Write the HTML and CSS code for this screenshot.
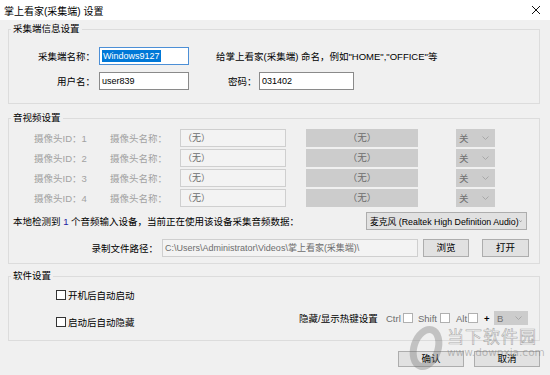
FILE: index.html
```html
<!DOCTYPE html>
<html lang="zh-CN">
  <head>
    <meta charset="UTF-8" />
    <meta name="viewport" content="width=device-width, initial-scale=1.0" />
    <title>掌上看家(采集端) 设置</title>
    <link rel="stylesheet" href="styles.css">
  </head>
  <body>
    <div class="titlebar">
      <span class="title">掌上看家(采集端) 设置</span>
      <svg class="close" width="10" height="10" viewBox="0 0 10 10">
        <path d="M1 1 L9 9 M9 1 L1 9" stroke="#111" stroke-width="1" fill="none" />
      </svg>
    </div>

    <div class="dialog">
      <fieldset class="group g-info">
        <legend>采集端信息设置</legend>
        <div class="info-row">
          <span class="lbl">采集端名称：</span>
          <div class="field focus"><span class="sel">Windows9127</span></div>
          <span class="hint">给掌上看家(采集端) 命名，例如"HOME","OFFICE"等</span>
        </div>
        <div class="info-row">
          <span class="lbl">用户名：</span>
          <div class="field">user839</div>
          <span class="lbl-pwd">密码：</span>
          <div class="field pwd">031402</div>
        </div>
      </fieldset>

      <fieldset class="group g-av">
        <legend>音视频设置</legend>
        <div class="cam-row">
          <span class="cam-id">摄像头ID：1</span>
          <span class="cam-name">摄像头名称：</span>
          <div class="field dis cam-field">（无）</div>
          <div class="greybox">（无）</div>
          <div class="dsel"><span>关</span><svg width="7" height="4" viewBox="0 0 7 4"><path d="M0.5 0.5 L3.5 3.5 L6.5 0.5" stroke="#a8a8a8" fill="none" /></svg></div>
        </div>
        <div class="cam-row">
          <span class="cam-id">摄像头ID：2</span>
          <span class="cam-name">摄像头名称：</span>
          <div class="field dis cam-field">（无）</div>
          <div class="greybox">（无）</div>
          <div class="dsel"><span>关</span><svg width="7" height="4" viewBox="0 0 7 4"><path d="M0.5 0.5 L3.5 3.5 L6.5 0.5" stroke="#a8a8a8" fill="none" /></svg></div>
        </div>
        <div class="cam-row">
          <span class="cam-id">摄像头ID：3</span>
          <span class="cam-name">摄像头名称：</span>
          <div class="field dis cam-field">（无）</div>
          <div class="greybox">（无）</div>
          <div class="dsel"><span>关</span><svg width="7" height="4" viewBox="0 0 7 4"><path d="M0.5 0.5 L3.5 3.5 L6.5 0.5" stroke="#a8a8a8" fill="none" /></svg></div>
        </div>
        <div class="cam-row">
          <span class="cam-id">摄像头ID：4</span>
          <span class="cam-name">摄像头名称：</span>
          <div class="field dis cam-field">（无）</div>
          <div class="greybox">（无）</div>
          <div class="dsel"><span>关</span><svg width="7" height="4" viewBox="0 0 7 4"><path d="M0.5 0.5 L3.5 3.5 L6.5 0.5" stroke="#a8a8a8" fill="none" /></svg></div>
        </div>

        <div class="audio-row">
          <span>本地检测到 <span class="num">1</span> 个音频输入设备，当前正在使用该设备采集音频数据：</span>
          <div class="combo"><span>麦克风 (Realtek High Definition Audio)</span><svg width="7" height="4" viewBox="0 0 7 4"><path d="M0.5 0.5 L3.5 3.5 L6.5 0.5" stroke="#555" fill="none" /></svg></div>
        </div>

        <div class="path-row">
          <span class="path-lbl">录制文件路径：</span>
          <div class="field dis path-field">C:\Users\Administrator\Videos\掌上看家(采集端)\</div>
          <div class="btn browse">浏览</div>
          <div class="btn open">打开</div>
        </div>
      </fieldset>

      <fieldset class="group g-soft">
        <legend>软件设置</legend>
        <div class="soft-body">
          <div class="checks">
            <label class="chk-row"><span class="box"></span>开机后自动启动</label>
            <label class="chk-row"><span class="box"></span>启动后自动隐藏</label>
          </div>
          <div class="hotkey">
            <span class="hk-lbl">隐藏/显示热键设置</span>
            <span class="mod ctrl">Ctrl</span><span class="box small"></span>
            <span class="mod shift">Shift</span><span class="box small"></span>
            <span class="mod alt">Alt</span><span class="box small"></span>
            <span class="plus">+</span>
            <div class="dsel key"><span>B</span><svg width="7" height="4" viewBox="0 0 7 4"><path d="M0.5 0.5 L3.5 3.5 L6.5 0.5" stroke="#a8a8a8" fill="none" /></svg></div>
          </div>
        </div>
      </fieldset>

      <div class="actions">
        <div class="btn big">确认</div>
        <div class="btn big">取消</div>
      </div>
    </div>

    <div class="watermark">
      <svg class="wm-logo" width="40" height="50" viewBox="0 0 40 50">
        <ellipse cx="20" cy="24" rx="12" ry="19" transform="rotate(18 20 24)" stroke="rgba(110,110,110,0.35)" stroke-width="7" fill="none" />
      </svg>
      <div class="wm-text">
        <div class="wm-cn">当下软件园</div>
        <div class="wm-url">www.downxia.com</div>
      </div>
    </div>
  </body>
</html>
```

FILE: styles.css
```css
* {
  box-sizing: border-box;
}

body {
  margin: 0;
  width: 550px;
  height: 375px;
  overflow: hidden;
  position: relative;
  background-color: #f0f0f0;
  font-family: "Liberation Sans", "Noto Sans CJK SC", sans-serif;
  font-size: 9.5px;
  color: #000;
}

.titlebar {
  height: 20px;
  background-color: #fff;
  display: flex;
  align-items: center;
  justify-content: space-between;
  padding: 0 9px 0 4px;
  font-size: 10px;
}

.dialog {
  padding: 3px 10px 0 8px;
}

.group {
  margin: 0;
  padding: 0;
  min-width: 0;
  border: 1px solid #dcdcdc;
}

.group legend {
  margin-left: 2px;
  padding: 0 2px;
  height: 12px;
  line-height: 12px;
}

/* info group */
.g-info {
  padding: 12px 0 13px 0;
}

.info-row {
  display: flex;
  align-items: center;
  height: 18px;
}

.info-row + .info-row {
  margin-top: 7px;
}

.lbl {
  width: 86px;
  margin-right: 4px;
  text-align: right;
}

.field {
  height: 18px;
  width: 90px;
  border: 1px solid #8a8a8a;
  background-color: #fff;
  padding-left: 2px;
  line-height: 16px;
  font-size: 9px;
  white-space: nowrap;
  overflow: hidden;
}

.field.focus {
  border-color: #4c8fd6;
}

.sel {
  background-color: #0078d7;
  color: #fff;
  padding: 1px 1px;
}

.hint {
  margin-left: 27px;
}

.lbl-pwd {
  margin-left: 39px;
  width: 31px;
}

.field.pwd {
  width: 95px;
}

/* audio / video group */
.g-av {
  margin-top: 8px;
  padding: 5px 0 6px 0;
}

.cam-row {
  display: flex;
  align-items: center;
  height: 18px;
  padding-left: 25px;
  color: #a2a2a2;
  margin-bottom: 2px;
}

.cam-id {
  width: 76px;
}

.cam-name {
  width: 70px;
}

.field.dis {
  border-color: #cfcfcf;
  background-color: #f3f3f3;
  color: #6d6d6d;
}

.cam-field {
  width: 106px;
}

.greybox {
  margin-left: 20px;
  width: 112px;
  height: 18px;
  line-height: 18px;
  background-color: #cccccc;
  color: #6d6d6d;
  text-align: center;
}

.dsel {
  margin-left: 38px;
  width: 39px;
  height: 18px;
  background-color: #cccccc;
  color: #707070;
  display: flex;
  align-items: center;
  justify-content: space-between;
  padding: 0 6px 0 3px;
}

.audio-row {
  display: flex;
  align-items: center;
  height: 18px;
  margin-top: 5px;
  padding-left: 4px;
}

.num {
  color: #1a1aa0;
}

.combo {
  margin-left: auto;
  margin-right: 12px;
  width: 161px;
  height: 18px;
  border: 1px solid #adadad;
  background-color: #e1e1e1;
  display: flex;
  align-items: center;
  justify-content: space-between;
  padding: 0 4px 0 3px;
  font-size: 8.8px;
  white-space: nowrap;
  overflow: hidden;
}

.path-row {
  display: flex;
  align-items: center;
  height: 18px;
  margin-top: 9px;
}

.path-lbl {
  width: 149px;
  margin-right: 4px;
  text-align: right;
}

.path-field {
  width: 256px;
}

.btn {
  height: 18px;
  line-height: 16px;
  border: 1px solid #adadad;
  background-color: #e1e1e1;
  text-align: center;
}

.btn.browse {
  margin-left: 5px;
  width: 46px;
}

.btn.open {
  margin-left: 13px;
  width: 47px;
}

/* software group */
.g-soft {
  margin-top: 6px;
  padding: 6px 0 11px 0;
}

.soft-body {
  display: flex;
  align-items: flex-end;
}

.checks {
  padding-left: 47px;
}

.chk-row {
  display: flex;
  align-items: center;
  height: 14px;
}

.chk-row + .chk-row {
  margin-top: 13px;
}

.box {
  width: 10px;
  height: 10px;
  border: 1px solid #333;
  background-color: #fff;
  margin-right: 2px;
}

.hotkey {
  margin-left: auto;
  margin-right: 11px;
  margin-bottom: 4px;
  display: flex;
  align-items: center;
  height: 14px;
}

.hk-lbl {
  width: 87px;
}

.mod {
  color: #6d6d6d;
}

.ctrl {
  width: 17px;
}

.shift {
  width: 22px;
}

.alt {
  width: 12px;
}

.box.small {
  border-color: #b0b0b0;
  margin-right: 5px;
}

.box.small + .shift + .box.small,
.alt + .box.small {
  margin-right: 6px;
}

.plus {
  font-weight: bold;
  width: 6px;
  margin-right: 4px;
}

.dsel.key {
  margin-left: 0;
  width: 34px;
  height: 14px;
}

/* bottom buttons */
.actions {
  display: flex;
  justify-content: flex-end;
  gap: 10px;
  margin-top: 10px;
}

.btn.big {
  width: 66px;
  height: 16px;
  line-height: 14px;
}

/* watermark of the screenshot site */
.watermark {
  position: absolute;
  left: 406px;
  top: 324px;
  display: flex;
  pointer-events: none;
}

.wm-text {
  margin-left: 1px;
  padding-top: 2px;
}

.wm-cn {
  font-family: "Noto Sans CJK SC", sans-serif;
  font-size: 17px;
  line-height: 20px;
  letter-spacing: 1px;
  color: rgba(255, 255, 255, 0.25);
  -webkit-text-stroke: 0.6px rgba(110, 110, 110, 0.55);
}

.wm-url {
  font-family: "DejaVu Sans", sans-serif;
  font-size: 10.5px;
  line-height: 12px;
  color: rgba(120, 120, 120, 0.45);
}
```
